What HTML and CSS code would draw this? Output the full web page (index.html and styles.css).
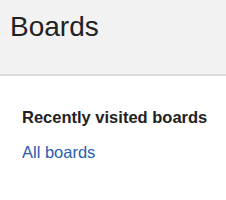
FILE: index.html
```html
<!DOCTYPE html>
<html>
<head>
<meta charset="utf-8">
<link rel="stylesheet" href="styles.css">
</head>
<body>
<header class="page-header">
  <h1 class="title">Boards</h1>
</header>
<main class="content">
  <h2 class="section-title">Recently visited boards</h2>
  <a class="all-link" href="#">All boards</a>
</main>
</body>
</html>
```
FILE: styles.css
```css
html, body {
  margin: 0;
  padding: 0;
  background: #fff;
  font-family: "Liberation Sans", Arial, sans-serif;
}
.page-header {
  background: #f2f2f2;
  border-bottom: 2px solid #dcdcdc;
  height: 74px;
  box-sizing: content-box;
  padding: 0 10px;
}
.title {
  margin: 0;
  padding-top: 11px;
  font-size: 28px;
  font-weight: normal;
  line-height: 32px;
  color: #222;
}
.content {
  padding: 31px 22px 0;
}
.section-title {
  margin: 0;
  font-size: 16.5px;
  font-weight: bold;
  line-height: 20px;
  color: #222;
  white-space: nowrap;
}
.all-link {
  display: block;
  margin-top: 15px;
  font-size: 16.5px;
  line-height: 20px;
  color: #2a5db0;
  text-decoration: none;
  white-space: nowrap;
}
```
